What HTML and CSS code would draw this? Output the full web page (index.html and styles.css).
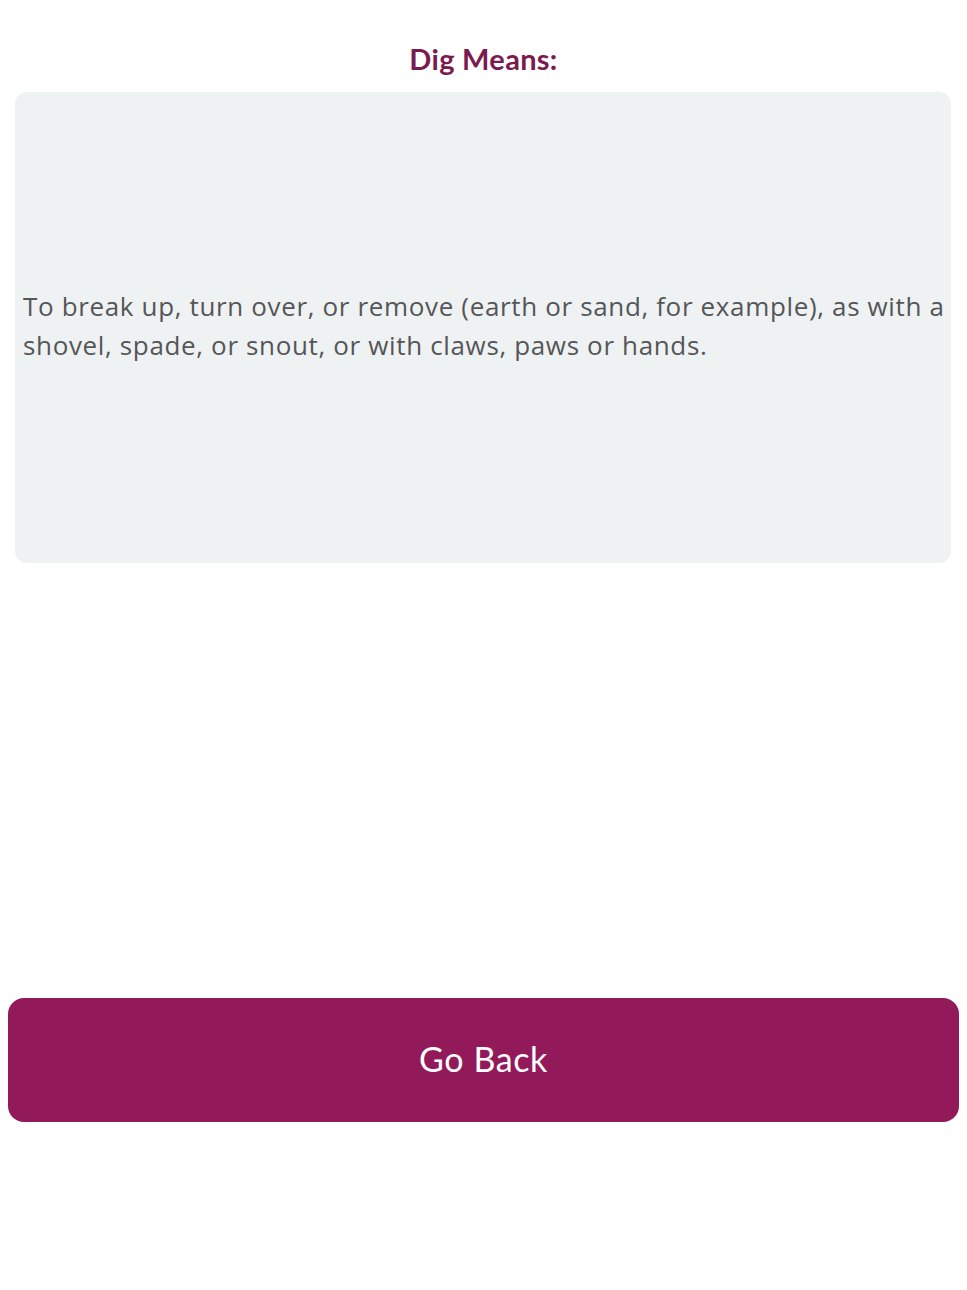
FILE: index.html
```html
<!DOCTYPE html>
<html lang="en">
<head>
<meta charset="utf-8">
<title>Dig Means</title>
<link rel="stylesheet" href="styles.css">
</head>
<body>
<main class="screen">
  <h1 class="word-title">Dig Means:</h1>
  <section class="definition-card">
    <p class="definition-text">To break up, turn over, or remove (earth or sand, for example), as with a shovel, spade, or snout, or with claws, paws or hands.</p>
  </section>
  <div class="spacer"></div>
  <button class="back-button" type="button">Go Back</button>
</main>
</body>
</html>
```
FILE: styles.css
```css
html, body {
  margin: 0;
  padding: 0;
  background: #ffffff;
}

body {
  font-family: Lato, "Noto Sans", "Liberation Sans", sans-serif;
  padding: 0 8px;
}

.screen {
  display: flex;
  flex-direction: column;
  height: 1290px;
}

.word-title {
  margin: 39px 0 0;
  height: 53px;
  text-align: center;
  font-size: 29px;
  font-weight: 700;
  letter-spacing: 0.3px;
  color: #7b1a4f;
  line-height: 40px;
}

.definition-card {
  margin: 0 8px 0 7px;
  height: 471px;
  background: #eff2f3;
  border-radius: 12px;
  display: flex;
  align-items: center;
  padding: 0 4px 0 8px;
}

.definition-text {
  margin: 0 0 4px;
  font-family: "Open Sans", Lato, sans-serif;
  font-size: 26px;
  letter-spacing: 0.65px;
  line-height: 39px;
  color: #555658;
}

.spacer {
  height: 435px;
}

.back-button {
  height: 124px;
  padding: 0 0 4px;
  border: none;
  border-radius: 16px;
  background: #921a5a;
  color: #ffffff;
  font-family: Lato, "Noto Sans", "Liberation Sans", sans-serif;
  font-size: 34px;
  font-weight: 400;
  letter-spacing: 0.6px;
  cursor: pointer;
}
```
